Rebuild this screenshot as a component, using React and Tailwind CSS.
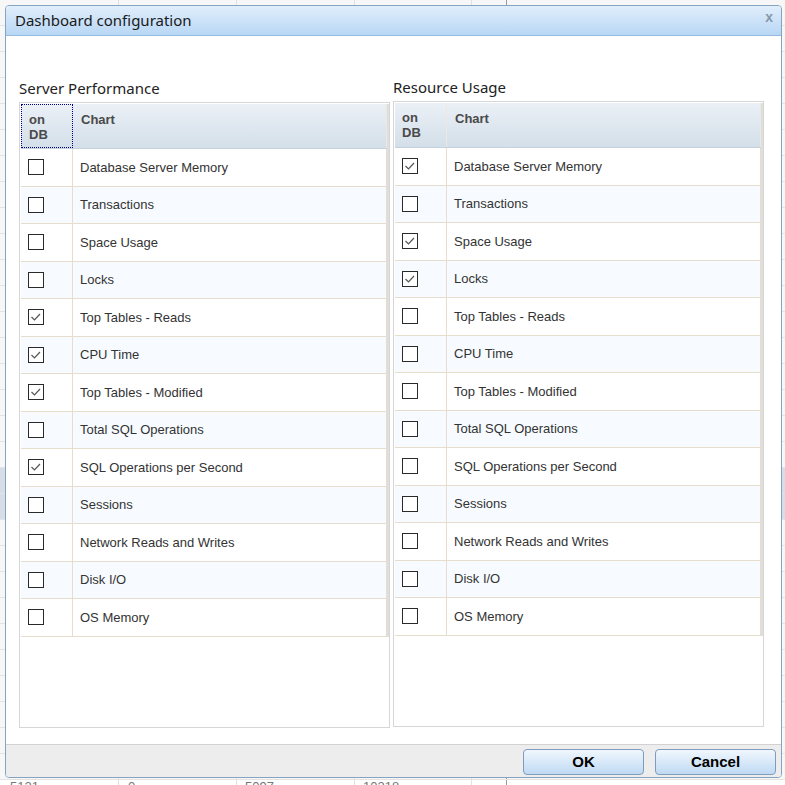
import React from "react";

const serverItems = [
  ["Database Server Memory", false],
  ["Transactions", false],
  ["Space Usage", false],
  ["Locks", false],
  ["Top Tables - Reads", true],
  ["CPU Time", true],
  ["Top Tables - Modified", true],
  ["Total SQL Operations", false],
  ["SQL Operations per Second", true],
  ["Sessions", false],
  ["Network Reads and Writes", false],
  ["Disk I/O", false],
  ["OS Memory", false],
];

const resourceItems = [
  ["Database Server Memory", true],
  ["Transactions", false],
  ["Space Usage", true],
  ["Locks", true],
  ["Top Tables - Reads", false],
  ["CPU Time", false],
  ["Top Tables - Modified", false],
  ["Total SQL Operations", false],
  ["SQL Operations per Second", false],
  ["Sessions", false],
  ["Network Reads and Writes", false],
  ["Disk I/O", false],
  ["OS Memory", false],
];

const bgRows = Array.from({ length: 30 }, (_, i) => i);

function CheckBox({ checked }) {
  return (
    <span className="flex h-4 w-4 items-center justify-center border border-[#2a2a2a] bg-white">
      {checked && (
        <svg width="14" height="14" viewBox="0 0 14 14">
          <path
            d="M2.5 7 L5.5 10 L11 4"
            fill="none"
            stroke="#555"
            strokeWidth="1.2"
          />
        </svg>
      )}
    </span>
  );
}

function ChartGrid({ title, items, focused, shift }) {
  return (
    <div className={"flex w-[371px] flex-col " + (shift ? "-mt-px" : "")}>
      <div className="h-5 text-[15px] leading-5 text-[#222] [font-family:'Noto_Sans',sans-serif]">
        {title}
      </div>
      <div className="mt-1 h-[626px] border border-[#d6d6d6] bg-white pt-px pb-px pl-px">
        <div className="border-r-2 border-[#dedede]">
          <div className="flex h-[45px] border-b border-[#c5d2de] bg-gradient-to-b from-[#ebf0f6] to-[#d3dfe9] text-[13px] leading-[15px] font-bold text-[#4a4a4a]">
            <div
              className={
                "w-[52px] pt-[7px] pl-[7px] " +
                (focused
                  ? "border border-dotted border-[#000080]"
                  : "border-r border-[#eee9df]")
              }
            >
              on
              <br />
              DB
            </div>
            <div className="flex-1 border-r border-[#eee9df] pt-2 pl-2">Chart</div>
          </div>
          {items.map(([label, checked], i) => (
            <div
              key={label}
              className={
                "flex h-[37.5px] border-r border-b border-[#e6ddcd] " +
                (i % 2 === 1 ? "bg-[#f7fbff]" : "bg-white")
              }
            >
              <div className="flex w-[52px] items-center border-r border-[#e6ddcd] pl-[7px]">
                <CheckBox checked={checked} />
              </div>
              <div className="flex flex-1 items-center pl-[7px] text-[13px] text-[#333]">
                {label}
              </div>
            </div>
          ))}
        </div>
      </div>
    </div>
  );
}

export default function App() {
  return (
    <div className="relative h-[785px] w-[785px] overflow-hidden bg-white [font-family:'Liberation_Sans',Arial,sans-serif]">
      {/* page behind the dialog */}
      <div className="flex flex-col">
        {bgRows.map((i) => (
          <div
            key={i}
            className={
              "flex h-[26px] border-b border-[#e4e4e4] " +
              (i === 18 || i === 19 ? "bg-[#d6dde7]" : "bg-[#f7f7f7]")
            }
          >
            <div className="w-[119px] border-r border-[#e0e0e0]" />
            <div className="w-[118px] border-r border-[#e0e0e0]" />
            <div className="w-[118px] border-r border-[#e0e0e0]" />
            <div className="w-[117px] border-r border-[#e0e0e0]" />
            <div className="w-[35px] border-r border-[#9a9a9a]" />
            <div className="flex-1" />
          </div>
        ))}
        <div className="flex h-[26px] bg-white text-[13px] leading-[13px] text-[#777]">
          <div className="w-[119px] border-r border-[#e0e0e0] pl-[10px]">5121</div>
          <div className="w-[118px] border-r border-[#e0e0e0] pl-[9px]">0</div>
          <div className="w-[118px] border-r border-[#e0e0e0] pl-[8px]">5097</div>
          <div className="w-[117px] border-r border-[#e0e0e0] pl-[8px]">10218</div>
          <div className="w-[35px] border-r border-[#9a9a9a]" />
          <div className="flex-1" />
        </div>
      </div>

      {/* dialog */}
      <div className="absolute top-[5px] left-[5px] flex h-[773px] w-[777px] flex-col overflow-hidden rounded-[4px] border border-[#86a3c2] bg-white">
        <div className="flex h-[30px] items-center justify-between border-b border-[#97bbdf] bg-gradient-to-b from-[#e1eefb] to-[#b8d7f5] pr-[8px] pl-[9px]">
          <span className="text-[15px] text-[#1a1a1a] [font-family:'Noto_Sans',sans-serif]">
            Dashboard configuration
          </span>
          <span className="-mt-[6px] text-[14px] font-bold text-[#8797a8]">x</span>
        </div>
        <div className="flex flex-1 gap-[3px] pt-[42px] pl-[13px]">
          <ChartGrid title="Server Performance" items={serverItems} focused />
          <ChartGrid title="Resource Usage" items={resourceItems} shift />
        </div>
        <div className="flex h-[33px] justify-end gap-[11px] border-t border-[#d2d2d2] bg-[#ededed] pt-[4px] pr-[5px]">
          <button className="h-[26px] w-[121px] rounded-[4px] border border-[#7e9dbd] bg-gradient-to-b from-[#f1f7fd] to-[#bfdaf3] text-[15px] font-bold text-black">
            OK
          </button>
          <button className="h-[26px] w-[121px] rounded-[4px] border border-[#7e9dbd] bg-gradient-to-b from-[#f1f7fd] to-[#bfdaf3] text-[15px] font-bold text-black">
            Cancel
          </button>
        </div>
      </div>
    </div>
  );
}
